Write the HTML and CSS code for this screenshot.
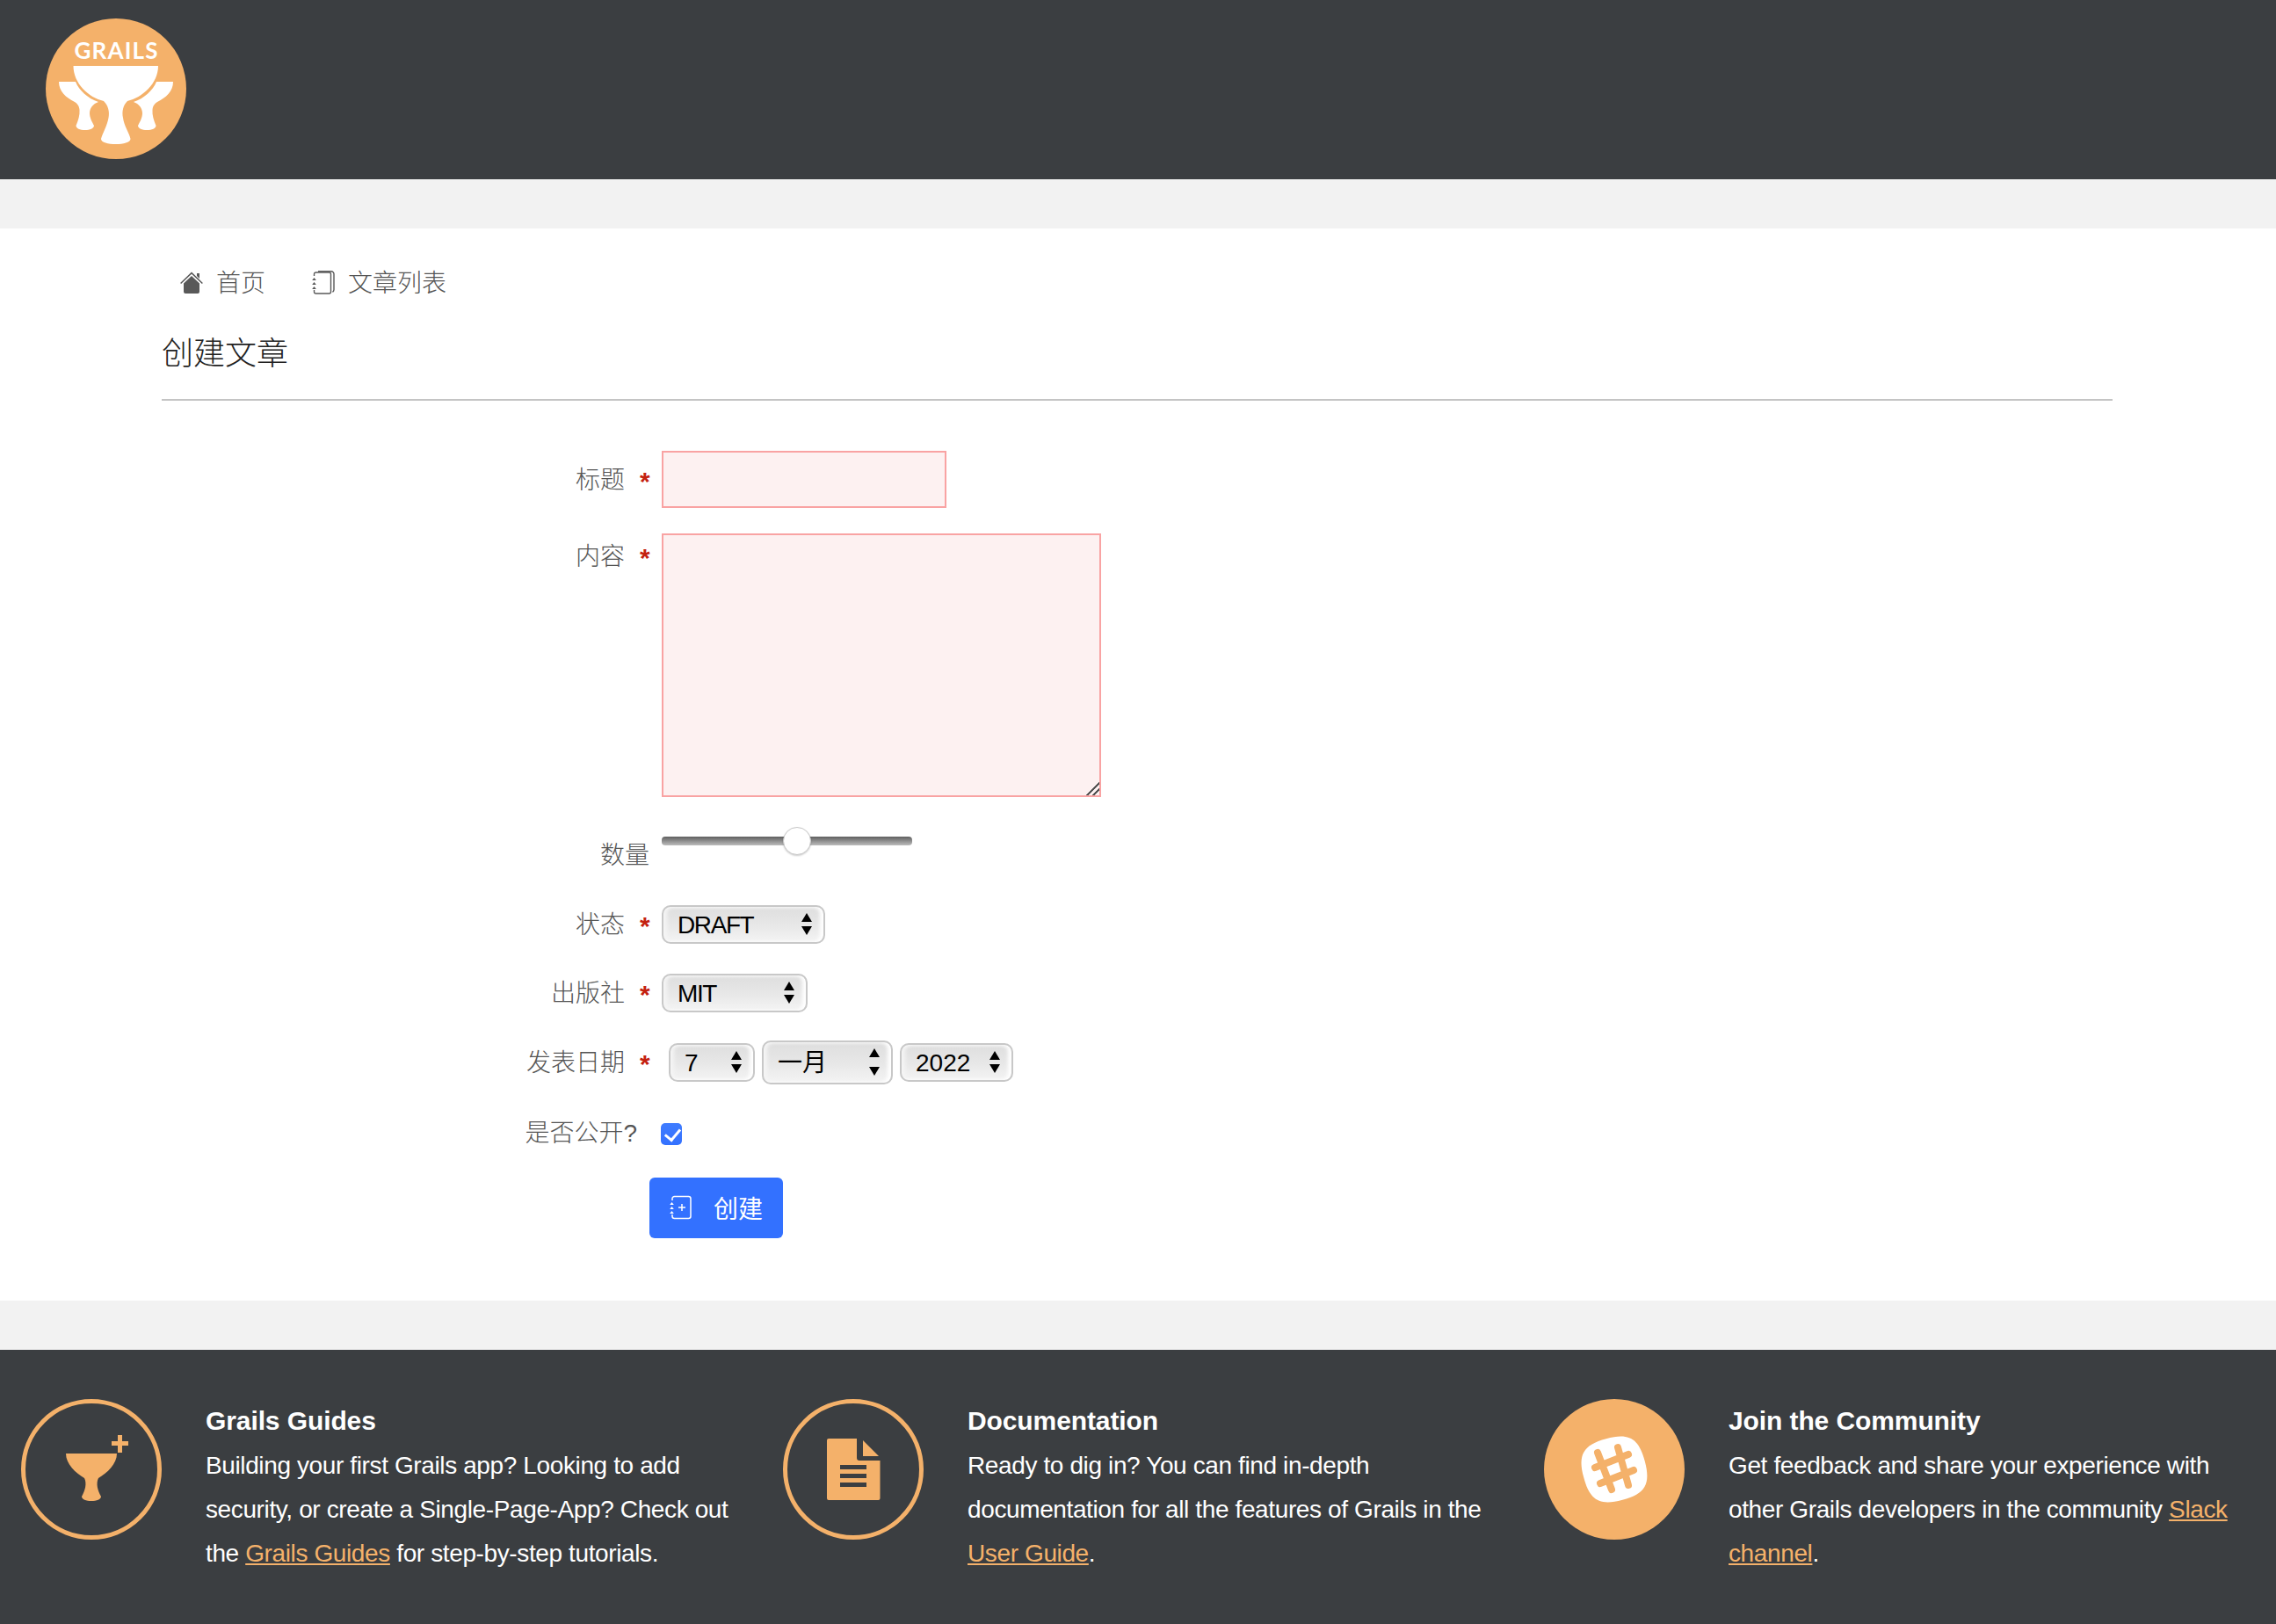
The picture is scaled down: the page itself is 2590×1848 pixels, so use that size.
FILE: index.html
```html
<!DOCTYPE html>
<html lang="zh-CN">
<head>
    <meta charset="UTF-8">
    <title>创建文章</title>
    <link rel="stylesheet" href="styles.css">
</head>
<body>
    <header class="topbar">
        <svg class="logo" viewBox="0 0 160 160">
            <circle cx="80" cy="80" r="80" fill="#f4b16a"/>
            <text class="logo-text" x="80" y="46" text-anchor="middle" textLength="95">GRAILS</text>
            <path fill="#fff" d="M31.5 54H128C128 74 110 90 93 94C88 99 86.5 106 88 113C89 122 95 130 96.5 137C96.5 141 88 143 80 143C71 143 63 141 63 137C65 130 70 122 71.5 113C73 106 71 99 66 94C49 90 31.5 74 31.5 54Z"/>
            <path fill="#fff" d="M15 72H34C38 82 48 91 60 95C54 97 50 102 50 108C50 113 53 118 55 122C55 125 50 127 45 127C39 127 34.5 125 34.5 122C37 116 39 110 38.5 104C38 99 36 97 33 95C23 90 15 83 15 72Z"/>
            <path fill="#fff" transform="translate(160) scale(-1,1)" d="M15 72H34C38 82 48 91 60 95C54 97 50 102 50 108C50 113 53 118 55 122C55 125 50 127 45 127C39 127 34.5 125 34.5 122C37 116 39 110 38.5 104C38 99 36 97 33 95C23 90 15 83 15 72Z"/>
        </svg>
    </header>

    <main class="content">
        <nav class="links">
            <a class="link" href="#">
                <svg class="nav-icon" viewBox="0 0 26 26">
                    <path fill="#595959" d="M4 13.5L13 5l9 8.5V23a2 2 0 0 1-2 2H6a2 2 0 0 1-2-2z"/>
                    <path fill="none" stroke="#595959" stroke-width="1.5" d="M.6 13.5L13 1.6l12.4 11.9"/>
                    <path fill="#595959" d="M19 2h3v6l-3-3z"/>
                </svg>
                首页
            </a>
            <a class="link" href="#">
                <svg class="nav-icon" viewBox="0 0 26 28">
                    <path fill="none" stroke="#595959" stroke-width="1.4" d="M2.5 6V4a2 2 0 0 1 2-2h15a2 2 0 0 1 2 2v20a2 2 0 0 1-2 2h-15a2 2 0 0 1-2-2v-2"/>
                    <path fill="none" stroke="#595959" stroke-width="1.4" d="M7 .8h15a3 3 0 0 1 3 3v18a3 3 0 0 1-1.5 2.5"/>
                    <path fill="#595959" d="M2.5 8l2.3 3h-4.6zM2.5 13l2.3 3h-4.6zM2.5 18l2.3 3h-4.6z"/>
                </svg>
                文章列表
            </a>
        </nav>
        <h1 class="page-title">创建文章</h1>

        <form class="form">
            <div class="field field-title">
                <label class="field-label">标题<span class="required">*</span></label>
                <input class="text-input" type="text">
            </div>
            <div class="field field-body">
                <label class="field-label">内容<span class="required">*</span></label>
                <textarea class="text-area"></textarea>
            </div>
            <div class="field field-range">
                <label class="field-label">数量</label>
                <input class="range" type="range" min="0" max="100" step="0.5" value="54.5">
            </div>
            <div class="field field-select">
                <label class="field-label">状态<span class="required">*</span></label>
                <span class="select-box status-box">
                    <select><option>DRAFT</option></select>
                </span>
            </div>
            <div class="field field-select">
                <label class="field-label">出版社<span class="required">*</span></label>
                <span class="select-box press-box">
                    <select><option>MIT</option></select>
                </span>
            </div>
            <div class="field field-date">
                <label class="field-label">发表日期<span class="required">*</span></label>
                <span class="date-group">
                    <span class="select-box day-box"><select><option>7</option></select></span>
                    <span class="select-box month-box"><select><option>一月</option></select></span>
                    <span class="select-box year-box"><select><option>2022</option></select></span>
                </span>
            </div>
            <div class="field field-check">
                <label class="field-label">是否公开?</label>
                <input class="check" type="checkbox" checked>
            </div>
            <button class="submit" type="button">
                <svg class="submit-icon" viewBox="0 0 26 28">
                    <path fill="none" stroke="#fff" stroke-width="1.5" d="M3 6V4a2.5 2.5 0 0 1 2.5-2.5h16a2.5 2.5 0 0 1 2.5 2.5v20a2.5 2.5 0 0 1-2.5 2.5h-16a2.5 2.5 0 0 1-2.5-2.5v-2"/>
                    <path fill="#fff" d="M2.5 8l2.3 3h-4.6zM2.5 13l2.3 3h-4.6zM2.5 18l2.3 3h-4.6z"/>
                    <path fill="none" stroke="#fff" stroke-width="1.5" d="M10 14h8M14 10v8"/>
                </svg>
                创建
            </button>
        </form>
    </main>

    <footer class="footer">
        <section class="card">
            <svg class="card-icon" viewBox="0 0 160 160">
                <circle cx="80" cy="80" r="77.5" fill="none" stroke="#f4b16a" stroke-width="5"/>
                <path fill="#f4b16a" d="M51 62H109C109 74 98 84 88 90C85 96 87 104 91 111C91 114 86 116 80 116C74 116 69 114 69 111C73 104 75 96 72 90C62 84 51 74 51 62Z"/>
                <path fill="#f4b16a" d="M110 41h5v7h7v5h-7v8h-5v-8h-7v-5h7z"/>
            </svg>
            <div class="card-text">
                <h2 class="card-title">Grails Guides</h2>
                <p class="card-copy">Building your first Grails app? Looking to add<br>security, or create a Single-Page-App? Check out<br>the <a href="#">Grails Guides</a> for step-by-step tutorials.</p>
            </div>
        </section>
        <section class="card">
            <svg class="card-icon" viewBox="0 0 160 160">
                <circle cx="80" cy="80" r="77.5" fill="none" stroke="#f4b16a" stroke-width="5"/>
                <path fill="#f4b16a" d="M52 45H84V67a3 3 0 0 0 3 3H110.5V113a2 2 0 0 1-2 2H52a2 2 0 0 1-2-2V47a2 2 0 0 1 2-2Z"/>
                <path fill="#f4b16a" d="M91 47L109 65H91Z"/>
                <path fill="#3b3e41" d="M65 75h30v5H65zM65 85h30v5H65zM65 95h30v5H65z"/>
            </svg>
            <div class="card-text">
                <h2 class="card-title">Documentation</h2>
                <p class="card-copy">Ready to dig in? You can find in-depth<br>documentation for all the features of Grails in the<br><a href="#">User Guide</a>.</p>
            </div>
        </section>
        <section class="card">
            <svg class="card-icon" viewBox="0 0 160 160">
                <circle cx="80" cy="80" r="80" fill="#f4b16a"/>
                <path fill="#fff" transform="rotate(-15 80 80)" d="M80 44C107 44 116 53 116 80C116 107 107 116 80 116C53 116 44 107 44 80C44 53 53 44 80 44Z"/>
                <path fill="none" stroke="#f4b16a" stroke-width="8" stroke-linecap="round" d="M61 61L77 103M84 55L96 98M58 78L96 63M64 96L102 81"/>
            </svg>
            <div class="card-text">
                <h2 class="card-title">Join the Community</h2>
                <p class="card-copy">Get feedback and share your experience with<br>other Grails developers in the community <a href="#">Slack</a><br><a href="#">channel</a>.</p>
            </div>
        </section>
    </footer>
</body>
</html>
```

FILE: styles.css
```css
* {
    box-sizing: border-box;
}
body {
    margin: 0;
    background-color: #f2f2f2;
    font-family: "Liberation Sans", "Noto Sans CJK SC", sans-serif;
    font-size: 28px;
    font-weight: 300;
    color: #555;
}

/* header */
.topbar {
    height: 204px;
    padding: 21px 52px 0;
    background-color: #3b3e41;
}
.logo {
    display: block;
    width: 160px;
    height: 160px;
}
.logo-text {
    font-family: Lato, sans-serif;
    font-weight: 700;
    font-size: 26px;
    fill: #fff;
}

/* main panel */
.content {
    height: 1220px;
    margin-top: 56px;
    padding: 43px 186px 0 184px;
    background-color: #fff;
}
.links {
    display: flex;
    height: 40px;
    padding-left: 21px;
    gap: 53px;
}
.link {
    display: flex;
    align-items: center;
    gap: 15px;
    color: #555;
    text-decoration: none;
    line-height: 40px;
}
.nav-icon {
    width: 26px;
    height: 28px;
    margin-top: -2px;
}
.page-title {
    height: 113px;
    margin: 0;
    padding-top: 39px;
    border-bottom: 2px solid #c4c4c4;
    font-size: 36px;
    font-weight: 300;
    line-height: 42px;
    color: #222;
}

/* form */
.form {
    padding-top: 57px;
}
.field {
    display: flex;
    align-items: flex-start;
}
.field-label {
    width: 555px;
    margin-right: 14px;
    padding-top: 2px;
    flex: none;
    text-align: right;
    line-height: 40px;
}
.required {
    display: inline-block;
    width: 11px;
    margin-left: 17px;
    color: #c4210f;
    font-weight: 700;
    font-size: 30px;
    line-height: 30px;
    vertical-align: -2px;
}
.field-title {
    height: 65px;
    align-items: center;
    margin-bottom: 29px;
}
.field-body {
    height: 300px;
    margin-bottom: 34px;
}
.field-body .field-label {
    padding-top: 7px;
}
.text-input, .text-area {
    display: block;
    border: 2px solid #f9a3a3;
    background-color: #fdf1f1;
    outline: none;
}
.text-input {
    width: 324px;
    height: 65px;
}
.text-area {
    width: 500px;
    height: 300px;
}
.text-area::-webkit-resizer {
    background: linear-gradient(135deg, transparent 48%, #555 48%, #555 58%, transparent 58%, transparent 72%, #555 72%, #555 82%, transparent 82%);
}
.field-range {
    height: 52px;
    margin-bottom: 37px;
}
.field-range .field-label {
    padding-top: 13px;
}
.range {
    width: 285px;
    height: 32px;
    margin: 0;
    appearance: none;
    background: transparent;
}
.range::-webkit-slider-runnable-track {
    height: 10px;
    border-radius: 4px;
    background: linear-gradient(#5f5f5f, #bdbdbd);
}
.range::-webkit-slider-thumb {
    appearance: none;
    width: 32px;
    height: 32px;
    margin-top: -11px;
    border-radius: 50%;
    border: 1px solid #c9c9c9;
    background: #fff;
    box-shadow: 0 1px 2px rgba(0, 0, 0, 0.2);
}
.field-select {
    height: 44px;
    align-items: center;
    margin-bottom: 34px;
}
.field-date {
    height: 50px;
    align-items: center;
    margin-top: -2px;
    margin-bottom: 34px;
}
.select-box {
    position: relative;
    display: block;
    height: 44px;
    border: 2px solid #c8c8c8;
    border-radius: 10px;
    background: linear-gradient(#dedede, #e8e8e8 55%, #f4f4f4);
    box-shadow: inset -4px 0 4px #fff, inset 4px 0 4px #f5f5f5;
}
.select-box::before, .select-box::after {
    content: "";
    position: absolute;
    right: 13px;
    border-left: 6.5px solid transparent;
    border-right: 6.5px solid transparent;
}
.select-box::before {
    top: 7px;
    border-bottom: 10px solid #000;
}
.select-box::after {
    bottom: 8px;
    border-top: 10px solid #000;
}
.select-box select {
    display: block;
    width: 100%;
    height: 100%;
    padding: 0 0 0 16px;
    border: none;
    background: transparent;
    appearance: none;
    font-family: inherit;
    font-size: 28px;
    color: #000;
    outline: none;
}
.status-box {
    width: 186px;
}
.status-box select, .press-box select {
    letter-spacing: -1.4px;
}
.press-box {
    width: 166px;
}
.date-group {
    display: flex;
    align-items: center;
    gap: 8px;
    margin-left: 8px;
}
.day-box {
    width: 98px;
}
.month-box {
    width: 149px;
    height: 50px;
}
.year-box {
    width: 129px;
}
.field-check {
    height: 40px;
    margin-bottom: 32px;
}
.field-check .field-label {
    padding-right: 14px;
}
.check {
    position: relative;
    width: 24px;
    height: 25px;
    margin: 10px 0 0 -1px;
    appearance: none;
    border-radius: 5px;
    background: linear-gradient(#3f7cff, #3371ff);
}
.check::after {
    content: "";
    position: absolute;
    left: 8px;
    top: 3px;
    width: 8px;
    height: 14px;
    border: solid #fff;
    border-width: 0 3.5px 3.5px 0;
    transform: rotate(40deg);
}
.submit {
    display: flex;
    align-items: center;
    gap: 24px;
    width: 152px;
    height: 69px;
    margin-left: 555px;
    padding: 0 0 2px 23px;
    border: none;
    border-radius: 6px;
    background-color: #3371ff;
    color: #fff;
    font-family: inherit;
    font-size: 28px;
}
.submit-icon {
    width: 26px;
    height: 28px;
}

/* footer */
.footer {
    display: grid;
    grid-template-columns: 867px 866px 1fr;
    height: 312px;
    margin-top: 56px;
    padding: 56px 0 0 24px;
    background-color: #3b3e41;
    color: #fff;
}
.card {
    display: flex;
    gap: 50px;
}
.card-icon {
    width: 160px;
    height: 160px;
    flex: none;
}
.card-title {
    margin: 0;
    padding-top: 5px;
    font-size: 30px;
    font-weight: 700;
    letter-spacing: -0.1px;
    line-height: 40px;
}
.card-copy {
    margin: 6px 0 0;
    font-size: 28px;
    letter-spacing: -0.38px;
    line-height: 50px;
    white-space: nowrap;
}
.card-copy a {
    color: #f4b16a;
}
```
